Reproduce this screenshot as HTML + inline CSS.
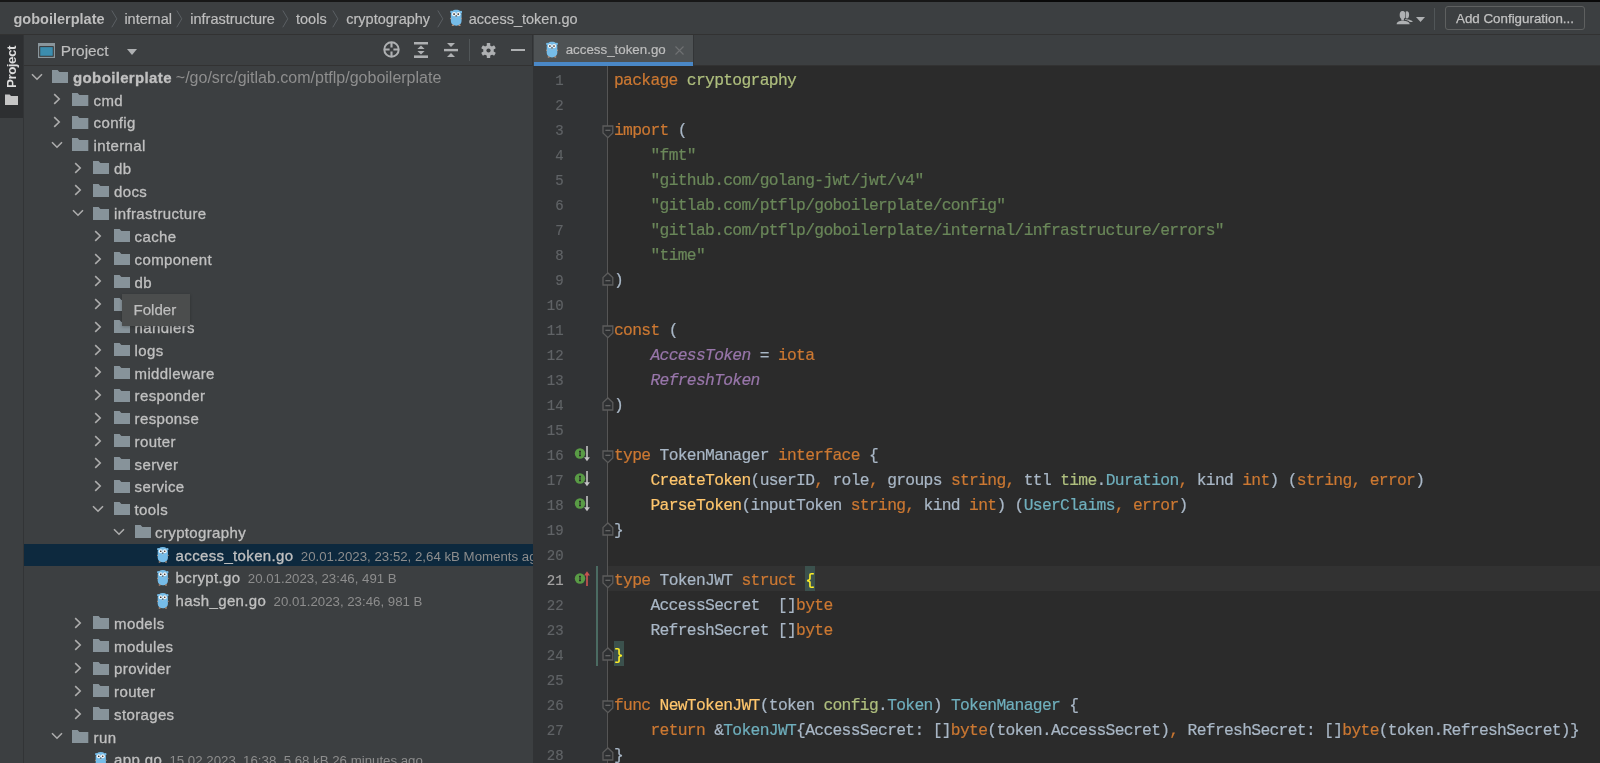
<!DOCTYPE html><html><head><meta charset="utf-8"><style>
*{margin:0;padding:0;box-sizing:border-box}
html,body{width:1600px;height:763px;overflow:hidden;background:#3C3F41;font-family:"Liberation Sans", sans-serif;}
.ab{position:absolute;display:block}
.t{position:absolute;white-space:pre;}
.nav{font-size:14.5px;color:#BEBEBE;-webkit-text-stroke:0.2px currentColor;}
.tree{font-size:15px;letter-spacing:0.35px;color:#C0C0C0;-webkit-text-stroke:0.3px currentColor;}
.meta{font-size:13.25px;letter-spacing:0;-webkit-text-stroke:0;color:#8D8D8D;}
.code{position:absolute;left:614px;font-family:"Liberation Mono", monospace;font-size:16.3px;letter-spacing:-0.667px;line-height:25px;white-space:pre;color:#A9B7C6;-webkit-text-stroke:0.2px currentColor;}
.ln{position:absolute;width:40px;text-align:right;font-family:"Liberation Mono", monospace;font-size:14px;line-height:25px;color:#606366;-webkit-text-stroke:0.2px currentColor;}
.k{color:#CC7832} .s{color:#6A8759} .pk{color:#AFBF7E} .fn{color:#FFC66D} .ty{color:#6FAFBD} .c{color:#9876AA;font-style:italic}
</style></head><body><div class="ab" style="left:0;top:0;width:1020px;height:2px;background:#171717"></div>
<div class="ab" style="left:1020px;top:0;width:580px;height:2px;background:#090909"></div>
<div class="ab" style="left:0;top:2px;width:1600px;height:32px;background:#3C3F41"></div>
<div class="ab" style="left:0;top:34px;width:1600px;height:1px;background:#323232"></div>
<svg class="ab" style="left:110.5px;top:10px" width="7" height="18" viewBox="0 0 7 18"><path d="M0.8 0.5L5.8 8.8L0.8 17.3" fill="none" stroke="#5B6064" stroke-width="1"/></svg>
<svg class="ab" style="left:176px;top:10px" width="7" height="18" viewBox="0 0 7 18"><path d="M0.8 0.5L5.8 8.8L0.8 17.3" fill="none" stroke="#5B6064" stroke-width="1"/></svg>
<svg class="ab" style="left:282px;top:10px" width="7" height="18" viewBox="0 0 7 18"><path d="M0.8 0.5L5.8 8.8L0.8 17.3" fill="none" stroke="#5B6064" stroke-width="1"/></svg>
<svg class="ab" style="left:332px;top:10px" width="7" height="18" viewBox="0 0 7 18"><path d="M0.8 0.5L5.8 8.8L0.8 17.3" fill="none" stroke="#5B6064" stroke-width="1"/></svg>
<svg class="ab" style="left:437px;top:10px" width="7" height="18" viewBox="0 0 7 18"><path d="M0.8 0.5L5.8 8.8L0.8 17.3" fill="none" stroke="#5B6064" stroke-width="1"/></svg>
<svg class="ab" style="left:450px;top:9px" width="12.4" height="17.2" viewBox="0 0 12 17"><g>
<circle cx="1.2" cy="2.9" r="1.15" fill="#76BCE8"/><circle cx="10.8" cy="2.9" r="1.15" fill="#76BCE8"/>
<path d="M6 0.7C9.3 0.7 11.3 2.6 11.3 5.5V11.6C11.3 14.6 9.2 16.5 6 16.5C2.8 16.5 0.7 14.6 0.7 11.6V5.5C0.7 2.6 2.7 0.7 6 0.7Z" fill="#76BCE8"/>
<ellipse cx="0.45" cy="9.3" rx="0.6" ry="0.75" fill="#B89178"/><ellipse cx="11.55" cy="9.3" rx="0.6" ry="0.75" fill="#B89178"/>
<ellipse cx="2.7" cy="16.1" rx="1.1" ry="0.75" fill="#B89178"/><ellipse cx="9.3" cy="16.1" rx="1.1" ry="0.75" fill="#B89178"/>
<circle cx="3.9" cy="5.1" r="2.05" fill="#F2F4F5"/><circle cx="8.1" cy="5.1" r="2.05" fill="#F2F4F5"/>
<circle cx="3.9" cy="5" r="0.85" fill="#1E1A1A"/><circle cx="8.0" cy="5" r="0.85" fill="#3A2E2A"/>
<ellipse cx="6" cy="7.6" rx="0.8" ry="0.55" fill="#E6CDB5"/>
<ellipse cx="6" cy="6.9" rx="0.75" ry="0.6" fill="#2A3442"/>
</g></svg>
<svg class="ab" style="left:1395px;top:10px" width="19" height="16" viewBox="0 0 19 16">
<ellipse cx="11.9" cy="4.8" rx="2.2" ry="3.6" fill="#AEB0B2"/>
<path d="M10 9.2C13 9.4 16.6 9.8 17.6 11.6L17.6 12H10Z" fill="#AEB0B2"/>
<g stroke="#3C3F41" stroke-width="1.1" fill="#AEB0B2">
<ellipse cx="7.6" cy="5" rx="2.9" ry="4.1"/>
<path d="M0.9 14.9C0.9 11.8 3.8 10.2 7.6 10C11.4 10.2 15.4 11.8 15.4 14.9Z"/>
</g>
<ellipse cx="7.6" cy="5" rx="2.9" ry="4.1" fill="#AEB0B2"/>
<rect x="6.3" y="7.5" width="2.6" height="3" fill="#AEB0B2"/>
</svg>
<svg class="ab" style="left:1416px;top:17px" width="9" height="5" viewBox="0 0 9 5"><path d="M0 0H9L4.5 5Z" fill="#AEB0B2"/></svg>
<div class="ab" style="left:1434px;top:8px;width:1px;height:22px;background:#515658"></div>
<div class="ab" style="left:1445px;top:6px;width:140px;height:24px;border:1px solid #5E6060;border-radius:3px"></div>
<div class="ab" style="left:0;top:35px;width:23px;height:728px;background:#3C3F41"></div>
<div class="ab" style="left:0;top:35px;width:23px;height:83px;background:#2D2F31"></div>
<div class="ab" style="left:23px;top:35px;width:1px;height:728px;background:#323436"></div>
<svg class="ab" style="left:5px;top:94px" width="13.3" height="11.4" viewBox="0 0 16.3 13"><path d="M0 0H5.6L7.4 2.1H16.3V13H0Z" fill="#C5C5C5"/></svg>
<div class="ab" style="left:24px;top:35px;width:509px;height:30px;background:#3C3F41"></div>
<div class="ab" style="left:24px;top:65px;width:509px;height:1px;background:#323232"></div>
<svg class="ab" style="left:38px;top:43px" width="17" height="15" viewBox="0 0 17 15"><rect x="0" y="0" width="17" height="15" fill="#8A969C"/><rect x="1.3" y="3.2" width="14.4" height="10.5" fill="#2B2B2B"/><rect x="2.2" y="4.1" width="12.6" height="8.7" fill="#3C8DAE"/></svg>
<svg class="ab" style="left:126.5px;top:48.5px" width="10" height="6" viewBox="0 0 10 6"><path d="M0 0H10L5 6Z" fill="#AEB0B2"/></svg>
<svg class="ab" style="left:383px;top:41px" width="17" height="17" viewBox="0 0 17 17"><circle cx="8.5" cy="8.5" r="7.2" fill="none" stroke="#AEB0B2" stroke-width="2"/><path d="M8.5 1V6.6M8.5 10.4V16M1 8.5H6.6M10.4 8.5H16" stroke="#AEB0B2" stroke-width="2.1"/></svg>
<svg class="ab" style="left:414px;top:42px" width="14" height="16" viewBox="0 0 14 16"><rect x="0" y="0" width="14" height="2.5" fill="#AEB0B2"/><rect x="0" y="13.4" width="14" height="2.6" fill="#AEB0B2"/><path d="M7 3.6L10.6 7H3.4Z M7 12.4L10.6 9H3.4Z" fill="#AEB0B2"/></svg>
<svg class="ab" style="left:443.5px;top:43px" width="14" height="14" viewBox="0 0 14 14"><path d="M3 0H11L7 4Z M3 14H11L7 10Z" fill="#AEB0B2"/><rect x="0" y="5.9" width="14" height="2.4" fill="#AEB0B2"/></svg>
<div class="ab" style="left:469px;top:39px;width:1px;height:22px;background:#515658"></div>
<svg class="ab" style="left:480.5px;top:42.5px" width="15" height="15" viewBox="0 0 15 15"><g fill="#AEB0B2"><circle cx="7.5" cy="7.5" r="5.2"/><g id="tg"><rect x="5.8" y="0" width="3.4" height="15" rx="0.6"/></g><rect x="5.8" y="0" width="3.4" height="15" rx="0.6" transform="rotate(60 7.5 7.5)"/><rect x="5.8" y="0" width="3.4" height="15" rx="0.6" transform="rotate(120 7.5 7.5)"/></g><circle cx="7.5" cy="7.5" r="2.1" fill="#3C3F41"/></svg>
<div class="ab" style="left:510.8px;top:48.8px;width:14.2px;height:2.6px;background:#AEB0B2"></div>
<div class="ab" style="left:533px;top:35px;width:1067px;height:31px;background:#3C3F41"></div>
<div class="ab" style="left:533.8px;top:35px;width:159.4px;height:27px;background:#4E5254"></div>
<div class="ab" style="left:533.8px;top:62px;width:159.4px;height:4px;background:#4A88C7"></div>
<div class="ab" style="left:693px;top:65px;width:907px;height:1px;background:#323232"></div>
<div class="ab" style="left:693.2px;top:35px;width:1px;height:31px;background:#333537"></div>
<svg class="ab" style="left:546px;top:41.2px" width="12" height="17" viewBox="0 0 12 17"><g>
<circle cx="1.2" cy="2.9" r="1.15" fill="#76BCE8"/><circle cx="10.8" cy="2.9" r="1.15" fill="#76BCE8"/>
<path d="M6 0.7C9.3 0.7 11.3 2.6 11.3 5.5V11.6C11.3 14.6 9.2 16.5 6 16.5C2.8 16.5 0.7 14.6 0.7 11.6V5.5C0.7 2.6 2.7 0.7 6 0.7Z" fill="#76BCE8"/>
<ellipse cx="0.45" cy="9.3" rx="0.6" ry="0.75" fill="#B89178"/><ellipse cx="11.55" cy="9.3" rx="0.6" ry="0.75" fill="#B89178"/>
<ellipse cx="2.7" cy="16.1" rx="1.1" ry="0.75" fill="#B89178"/><ellipse cx="9.3" cy="16.1" rx="1.1" ry="0.75" fill="#B89178"/>
<circle cx="3.9" cy="5.1" r="2.05" fill="#F2F4F5"/><circle cx="8.1" cy="5.1" r="2.05" fill="#F2F4F5"/>
<circle cx="3.9" cy="5" r="0.85" fill="#1E1A1A"/><circle cx="8.0" cy="5" r="0.85" fill="#3A2E2A"/>
<ellipse cx="6" cy="7.6" rx="0.8" ry="0.55" fill="#E6CDB5"/>
<ellipse cx="6" cy="6.9" rx="0.75" ry="0.6" fill="#2A3442"/>
</g></svg>
<svg class="ab" style="left:675px;top:45.5px" width="9" height="9" viewBox="0 0 9 9"><path d="M0.5 0.5L8.5 8.5M8.5 0.5L0.5 8.5" stroke="#6F7173" stroke-width="1.1"/></svg>
<div class="ab" style="left:533px;top:66px;width:74px;height:697px;background:#313335"></div>
<div class="ab" style="left:532px;top:35px;width:1px;height:31px;background:#313335"></div>
<div class="ab" style="left:607px;top:66px;width:1px;height:697px;background:#555555"></div>
<div class="ab" style="left:608px;top:66px;width:992px;height:697px;background:#2B2B2B"></div>
<div class="ab" style="left:24px;top:543.70px;width:509px;height:22.4px;background:#0D293E"></div>
<div class="ab" style="left:24px;top:66px;width:509px;height:697px;overflow:hidden">
<svg class="ab" style="left:6.699999999999999px;top:6.67px" width="12" height="8" viewBox="0 0 12 8"><path d="M1 1.2L6 6.2L11 1.2" fill="none" stroke="#ADADAD" stroke-width="1.6"/></svg>
<svg class="ab" style="left:27.7px;top:4.17px" width="16.3" height="13" viewBox="0 0 16.3 13"><path d="M0 0H5.6L7.4 2.1H16.3V13H0Z" fill="#87939A"/></svg>
<svg class="ab" style="left:29.200000000000003px;top:27.42px" width="8" height="12" viewBox="0 0 8 12"><path d="M1.2 1.2L6.2 6L1.2 10.8" fill="none" stroke="#ADADAD" stroke-width="1.6"/></svg>
<svg class="ab" style="left:48.4px;top:26.92px" width="16.3" height="13" viewBox="0 0 16.3 13"><path d="M0 0H5.6L7.4 2.1H16.3V13H0Z" fill="#87939A"/></svg>
<svg class="ab" style="left:29.200000000000003px;top:50.17px" width="8" height="12" viewBox="0 0 8 12"><path d="M1.2 1.2L6.2 6L1.2 10.8" fill="none" stroke="#ADADAD" stroke-width="1.6"/></svg>
<svg class="ab" style="left:48.4px;top:49.67px" width="16.3" height="13" viewBox="0 0 16.3 13"><path d="M0 0H5.6L7.4 2.1H16.3V13H0Z" fill="#87939A"/></svg>
<svg class="ab" style="left:27.200000000000003px;top:74.93px" width="12" height="8" viewBox="0 0 12 8"><path d="M1 1.2L6 6.2L11 1.2" fill="none" stroke="#ADADAD" stroke-width="1.6"/></svg>
<svg class="ab" style="left:48.4px;top:72.43px" width="16.3" height="13" viewBox="0 0 16.3 13"><path d="M0 0H5.6L7.4 2.1H16.3V13H0Z" fill="#87939A"/></svg>
<svg class="ab" style="left:49.7px;top:95.68px" width="8" height="12" viewBox="0 0 8 12"><path d="M1.2 1.2L6.2 6L1.2 10.8" fill="none" stroke="#ADADAD" stroke-width="1.6"/></svg>
<svg class="ab" style="left:69.1px;top:95.18px" width="16.3" height="13" viewBox="0 0 16.3 13"><path d="M0 0H5.6L7.4 2.1H16.3V13H0Z" fill="#87939A"/></svg>
<svg class="ab" style="left:49.7px;top:118.43px" width="8" height="12" viewBox="0 0 8 12"><path d="M1.2 1.2L6.2 6L1.2 10.8" fill="none" stroke="#ADADAD" stroke-width="1.6"/></svg>
<svg class="ab" style="left:69.1px;top:117.93px" width="16.3" height="13" viewBox="0 0 16.3 13"><path d="M0 0H5.6L7.4 2.1H16.3V13H0Z" fill="#87939A"/></svg>
<svg class="ab" style="left:47.7px;top:143.18px" width="12" height="8" viewBox="0 0 12 8"><path d="M1 1.2L6 6.2L11 1.2" fill="none" stroke="#ADADAD" stroke-width="1.6"/></svg>
<svg class="ab" style="left:69.1px;top:140.68px" width="16.3" height="13" viewBox="0 0 16.3 13"><path d="M0 0H5.6L7.4 2.1H16.3V13H0Z" fill="#87939A"/></svg>
<svg class="ab" style="left:70.2px;top:163.93px" width="8" height="12" viewBox="0 0 8 12"><path d="M1.2 1.2L6.2 6L1.2 10.8" fill="none" stroke="#ADADAD" stroke-width="1.6"/></svg>
<svg class="ab" style="left:89.8px;top:163.43px" width="16.3" height="13" viewBox="0 0 16.3 13"><path d="M0 0H5.6L7.4 2.1H16.3V13H0Z" fill="#87939A"/></svg>
<svg class="ab" style="left:70.2px;top:186.68px" width="8" height="12" viewBox="0 0 8 12"><path d="M1.2 1.2L6.2 6L1.2 10.8" fill="none" stroke="#ADADAD" stroke-width="1.6"/></svg>
<svg class="ab" style="left:89.8px;top:186.18px" width="16.3" height="13" viewBox="0 0 16.3 13"><path d="M0 0H5.6L7.4 2.1H16.3V13H0Z" fill="#87939A"/></svg>
<svg class="ab" style="left:70.2px;top:209.43px" width="8" height="12" viewBox="0 0 8 12"><path d="M1.2 1.2L6.2 6L1.2 10.8" fill="none" stroke="#ADADAD" stroke-width="1.6"/></svg>
<svg class="ab" style="left:89.8px;top:208.93px" width="16.3" height="13" viewBox="0 0 16.3 13"><path d="M0 0H5.6L7.4 2.1H16.3V13H0Z" fill="#87939A"/></svg>
<svg class="ab" style="left:70.2px;top:232.18px" width="8" height="12" viewBox="0 0 8 12"><path d="M1.2 1.2L6.2 6L1.2 10.8" fill="none" stroke="#ADADAD" stroke-width="1.6"/></svg>
<svg class="ab" style="left:89.8px;top:231.68px" width="16.3" height="13" viewBox="0 0 16.3 13"><path d="M0 0H5.6L7.4 2.1H16.3V13H0Z" fill="#87939A"/></svg>
<svg class="ab" style="left:70.2px;top:254.93px" width="8" height="12" viewBox="0 0 8 12"><path d="M1.2 1.2L6.2 6L1.2 10.8" fill="none" stroke="#ADADAD" stroke-width="1.6"/></svg>
<svg class="ab" style="left:89.8px;top:254.43px" width="16.3" height="13" viewBox="0 0 16.3 13"><path d="M0 0H5.6L7.4 2.1H16.3V13H0Z" fill="#87939A"/></svg>
<svg class="ab" style="left:70.2px;top:277.68px" width="8" height="12" viewBox="0 0 8 12"><path d="M1.2 1.2L6.2 6L1.2 10.8" fill="none" stroke="#ADADAD" stroke-width="1.6"/></svg>
<svg class="ab" style="left:89.8px;top:277.18px" width="16.3" height="13" viewBox="0 0 16.3 13"><path d="M0 0H5.6L7.4 2.1H16.3V13H0Z" fill="#87939A"/></svg>
<svg class="ab" style="left:70.2px;top:300.43px" width="8" height="12" viewBox="0 0 8 12"><path d="M1.2 1.2L6.2 6L1.2 10.8" fill="none" stroke="#ADADAD" stroke-width="1.6"/></svg>
<svg class="ab" style="left:89.8px;top:299.93px" width="16.3" height="13" viewBox="0 0 16.3 13"><path d="M0 0H5.6L7.4 2.1H16.3V13H0Z" fill="#87939A"/></svg>
<svg class="ab" style="left:70.2px;top:323.18px" width="8" height="12" viewBox="0 0 8 12"><path d="M1.2 1.2L6.2 6L1.2 10.8" fill="none" stroke="#ADADAD" stroke-width="1.6"/></svg>
<svg class="ab" style="left:89.8px;top:322.68px" width="16.3" height="13" viewBox="0 0 16.3 13"><path d="M0 0H5.6L7.4 2.1H16.3V13H0Z" fill="#87939A"/></svg>
<svg class="ab" style="left:70.2px;top:345.93px" width="8" height="12" viewBox="0 0 8 12"><path d="M1.2 1.2L6.2 6L1.2 10.8" fill="none" stroke="#ADADAD" stroke-width="1.6"/></svg>
<svg class="ab" style="left:89.8px;top:345.43px" width="16.3" height="13" viewBox="0 0 16.3 13"><path d="M0 0H5.6L7.4 2.1H16.3V13H0Z" fill="#87939A"/></svg>
<svg class="ab" style="left:70.2px;top:368.68px" width="8" height="12" viewBox="0 0 8 12"><path d="M1.2 1.2L6.2 6L1.2 10.8" fill="none" stroke="#ADADAD" stroke-width="1.6"/></svg>
<svg class="ab" style="left:89.8px;top:368.18px" width="16.3" height="13" viewBox="0 0 16.3 13"><path d="M0 0H5.6L7.4 2.1H16.3V13H0Z" fill="#87939A"/></svg>
<svg class="ab" style="left:70.2px;top:391.43px" width="8" height="12" viewBox="0 0 8 12"><path d="M1.2 1.2L6.2 6L1.2 10.8" fill="none" stroke="#ADADAD" stroke-width="1.6"/></svg>
<svg class="ab" style="left:89.8px;top:390.93px" width="16.3" height="13" viewBox="0 0 16.3 13"><path d="M0 0H5.6L7.4 2.1H16.3V13H0Z" fill="#87939A"/></svg>
<svg class="ab" style="left:70.2px;top:414.18px" width="8" height="12" viewBox="0 0 8 12"><path d="M1.2 1.2L6.2 6L1.2 10.8" fill="none" stroke="#ADADAD" stroke-width="1.6"/></svg>
<svg class="ab" style="left:89.8px;top:413.68px" width="16.3" height="13" viewBox="0 0 16.3 13"><path d="M0 0H5.6L7.4 2.1H16.3V13H0Z" fill="#87939A"/></svg>
<svg class="ab" style="left:68.2px;top:438.93px" width="12" height="8" viewBox="0 0 12 8"><path d="M1 1.2L6 6.2L11 1.2" fill="none" stroke="#ADADAD" stroke-width="1.6"/></svg>
<svg class="ab" style="left:89.8px;top:436.43px" width="16.3" height="13" viewBox="0 0 16.3 13"><path d="M0 0H5.6L7.4 2.1H16.3V13H0Z" fill="#87939A"/></svg>
<svg class="ab" style="left:88.7px;top:461.67px" width="12" height="8" viewBox="0 0 12 8"><path d="M1 1.2L6 6.2L11 1.2" fill="none" stroke="#ADADAD" stroke-width="1.6"/></svg>
<svg class="ab" style="left:110.5px;top:459.17px" width="16.3" height="13" viewBox="0 0 16.3 13"><path d="M0 0H5.6L7.4 2.1H16.3V13H0Z" fill="#87939A"/></svg>
<svg class="ab" style="left:133.4px;top:480.02px" width="11.6" height="17.2" viewBox="0 0 12 17"><g>
<circle cx="1.2" cy="2.9" r="1.15" fill="#76BCE8"/><circle cx="10.8" cy="2.9" r="1.15" fill="#76BCE8"/>
<path d="M6 0.7C9.3 0.7 11.3 2.6 11.3 5.5V11.6C11.3 14.6 9.2 16.5 6 16.5C2.8 16.5 0.7 14.6 0.7 11.6V5.5C0.7 2.6 2.7 0.7 6 0.7Z" fill="#76BCE8"/>
<ellipse cx="0.45" cy="9.3" rx="0.6" ry="0.75" fill="#B89178"/><ellipse cx="11.55" cy="9.3" rx="0.6" ry="0.75" fill="#B89178"/>
<ellipse cx="2.7" cy="16.1" rx="1.1" ry="0.75" fill="#B89178"/><ellipse cx="9.3" cy="16.1" rx="1.1" ry="0.75" fill="#B89178"/>
<circle cx="3.9" cy="5.1" r="2.05" fill="#F2F4F5"/><circle cx="8.1" cy="5.1" r="2.05" fill="#F2F4F5"/>
<circle cx="3.9" cy="5" r="0.85" fill="#1E1A1A"/><circle cx="8.0" cy="5" r="0.85" fill="#3A2E2A"/>
<ellipse cx="6" cy="7.6" rx="0.8" ry="0.55" fill="#E6CDB5"/>
<ellipse cx="6" cy="6.9" rx="0.75" ry="0.6" fill="#2A3442"/>
</g></svg>
<svg class="ab" style="left:133.4px;top:502.77px" width="11.6" height="17.2" viewBox="0 0 12 17"><g>
<circle cx="1.2" cy="2.9" r="1.15" fill="#76BCE8"/><circle cx="10.8" cy="2.9" r="1.15" fill="#76BCE8"/>
<path d="M6 0.7C9.3 0.7 11.3 2.6 11.3 5.5V11.6C11.3 14.6 9.2 16.5 6 16.5C2.8 16.5 0.7 14.6 0.7 11.6V5.5C0.7 2.6 2.7 0.7 6 0.7Z" fill="#76BCE8"/>
<ellipse cx="0.45" cy="9.3" rx="0.6" ry="0.75" fill="#B89178"/><ellipse cx="11.55" cy="9.3" rx="0.6" ry="0.75" fill="#B89178"/>
<ellipse cx="2.7" cy="16.1" rx="1.1" ry="0.75" fill="#B89178"/><ellipse cx="9.3" cy="16.1" rx="1.1" ry="0.75" fill="#B89178"/>
<circle cx="3.9" cy="5.1" r="2.05" fill="#F2F4F5"/><circle cx="8.1" cy="5.1" r="2.05" fill="#F2F4F5"/>
<circle cx="3.9" cy="5" r="0.85" fill="#1E1A1A"/><circle cx="8.0" cy="5" r="0.85" fill="#3A2E2A"/>
<ellipse cx="6" cy="7.6" rx="0.8" ry="0.55" fill="#E6CDB5"/>
<ellipse cx="6" cy="6.9" rx="0.75" ry="0.6" fill="#2A3442"/>
</g></svg>
<svg class="ab" style="left:133.4px;top:525.52px" width="11.6" height="17.2" viewBox="0 0 12 17"><g>
<circle cx="1.2" cy="2.9" r="1.15" fill="#76BCE8"/><circle cx="10.8" cy="2.9" r="1.15" fill="#76BCE8"/>
<path d="M6 0.7C9.3 0.7 11.3 2.6 11.3 5.5V11.6C11.3 14.6 9.2 16.5 6 16.5C2.8 16.5 0.7 14.6 0.7 11.6V5.5C0.7 2.6 2.7 0.7 6 0.7Z" fill="#76BCE8"/>
<ellipse cx="0.45" cy="9.3" rx="0.6" ry="0.75" fill="#B89178"/><ellipse cx="11.55" cy="9.3" rx="0.6" ry="0.75" fill="#B89178"/>
<ellipse cx="2.7" cy="16.1" rx="1.1" ry="0.75" fill="#B89178"/><ellipse cx="9.3" cy="16.1" rx="1.1" ry="0.75" fill="#B89178"/>
<circle cx="3.9" cy="5.1" r="2.05" fill="#F2F4F5"/><circle cx="8.1" cy="5.1" r="2.05" fill="#F2F4F5"/>
<circle cx="3.9" cy="5" r="0.85" fill="#1E1A1A"/><circle cx="8.0" cy="5" r="0.85" fill="#3A2E2A"/>
<ellipse cx="6" cy="7.6" rx="0.8" ry="0.55" fill="#E6CDB5"/>
<ellipse cx="6" cy="6.9" rx="0.75" ry="0.6" fill="#2A3442"/>
</g></svg>
<svg class="ab" style="left:49.7px;top:550.67px" width="8" height="12" viewBox="0 0 8 12"><path d="M1.2 1.2L6.2 6L1.2 10.8" fill="none" stroke="#ADADAD" stroke-width="1.6"/></svg>
<svg class="ab" style="left:69.1px;top:550.17px" width="16.3" height="13" viewBox="0 0 16.3 13"><path d="M0 0H5.6L7.4 2.1H16.3V13H0Z" fill="#87939A"/></svg>
<svg class="ab" style="left:49.7px;top:573.42px" width="8" height="12" viewBox="0 0 8 12"><path d="M1.2 1.2L6.2 6L1.2 10.8" fill="none" stroke="#ADADAD" stroke-width="1.6"/></svg>
<svg class="ab" style="left:69.1px;top:572.92px" width="16.3" height="13" viewBox="0 0 16.3 13"><path d="M0 0H5.6L7.4 2.1H16.3V13H0Z" fill="#87939A"/></svg>
<svg class="ab" style="left:49.7px;top:596.17px" width="8" height="12" viewBox="0 0 8 12"><path d="M1.2 1.2L6.2 6L1.2 10.8" fill="none" stroke="#ADADAD" stroke-width="1.6"/></svg>
<svg class="ab" style="left:69.1px;top:595.67px" width="16.3" height="13" viewBox="0 0 16.3 13"><path d="M0 0H5.6L7.4 2.1H16.3V13H0Z" fill="#87939A"/></svg>
<svg class="ab" style="left:49.7px;top:618.92px" width="8" height="12" viewBox="0 0 8 12"><path d="M1.2 1.2L6.2 6L1.2 10.8" fill="none" stroke="#ADADAD" stroke-width="1.6"/></svg>
<svg class="ab" style="left:69.1px;top:618.42px" width="16.3" height="13" viewBox="0 0 16.3 13"><path d="M0 0H5.6L7.4 2.1H16.3V13H0Z" fill="#87939A"/></svg>
<svg class="ab" style="left:49.7px;top:641.67px" width="8" height="12" viewBox="0 0 8 12"><path d="M1.2 1.2L6.2 6L1.2 10.8" fill="none" stroke="#ADADAD" stroke-width="1.6"/></svg>
<svg class="ab" style="left:69.1px;top:641.17px" width="16.3" height="13" viewBox="0 0 16.3 13"><path d="M0 0H5.6L7.4 2.1H16.3V13H0Z" fill="#87939A"/></svg>
<svg class="ab" style="left:27.200000000000003px;top:666.42px" width="12" height="8" viewBox="0 0 12 8"><path d="M1 1.2L6 6.2L11 1.2" fill="none" stroke="#ADADAD" stroke-width="1.6"/></svg>
<svg class="ab" style="left:48.4px;top:663.92px" width="16.3" height="13" viewBox="0 0 16.3 13"><path d="M0 0H5.6L7.4 2.1H16.3V13H0Z" fill="#87939A"/></svg>
<svg class="ab" style="left:71.3px;top:684.77px" width="11.6" height="17.2" viewBox="0 0 12 17"><g>
<circle cx="1.2" cy="2.9" r="1.15" fill="#76BCE8"/><circle cx="10.8" cy="2.9" r="1.15" fill="#76BCE8"/>
<path d="M6 0.7C9.3 0.7 11.3 2.6 11.3 5.5V11.6C11.3 14.6 9.2 16.5 6 16.5C2.8 16.5 0.7 14.6 0.7 11.6V5.5C0.7 2.6 2.7 0.7 6 0.7Z" fill="#76BCE8"/>
<ellipse cx="0.45" cy="9.3" rx="0.6" ry="0.75" fill="#B89178"/><ellipse cx="11.55" cy="9.3" rx="0.6" ry="0.75" fill="#B89178"/>
<ellipse cx="2.7" cy="16.1" rx="1.1" ry="0.75" fill="#B89178"/><ellipse cx="9.3" cy="16.1" rx="1.1" ry="0.75" fill="#B89178"/>
<circle cx="3.9" cy="5.1" r="2.05" fill="#F2F4F5"/><circle cx="8.1" cy="5.1" r="2.05" fill="#F2F4F5"/>
<circle cx="3.9" cy="5" r="0.85" fill="#1E1A1A"/><circle cx="8.0" cy="5" r="0.85" fill="#3A2E2A"/>
<ellipse cx="6" cy="7.6" rx="0.8" ry="0.55" fill="#E6CDB5"/>
<ellipse cx="6" cy="6.9" rx="0.75" ry="0.6" fill="#2A3442"/>
</g></svg>
</div>
<div class="ab" style="left:608px;top:566px;width:992px;height:25px;background:#323232"></div>
<div class="ab" style="left:805.3px;top:566px;width:9.7px;height:25px;background:#3B514D"></div>
<div class="ab" style="left:614.3px;top:641px;width:9.5px;height:25px;background:#3B514D"></div>
<svg class="ab" style="left:601.5px;top:124.6px" width="12" height="14" viewBox="0 0 12 14"><path d="M1 1H10.8V8L5.9 12.6L1 8Z" fill="#2E3032" stroke="#5C5C5C" stroke-width="1.3"/><path d="M3.4 5.3H8.4" stroke="#6A6A6A" stroke-width="1.2"/></svg>
<svg class="ab" style="left:601.5px;top:324.6px" width="12" height="14" viewBox="0 0 12 14"><path d="M1 1H10.8V8L5.9 12.6L1 8Z" fill="#2E3032" stroke="#5C5C5C" stroke-width="1.3"/><path d="M3.4 5.3H8.4" stroke="#6A6A6A" stroke-width="1.2"/></svg>
<svg class="ab" style="left:601.5px;top:449.6px" width="12" height="14" viewBox="0 0 12 14"><path d="M1 1H10.8V8L5.9 12.6L1 8Z" fill="#2E3032" stroke="#5C5C5C" stroke-width="1.3"/><path d="M3.4 5.3H8.4" stroke="#6A6A6A" stroke-width="1.2"/></svg>
<svg class="ab" style="left:601.5px;top:574.6px" width="12" height="14" viewBox="0 0 12 14"><path d="M1 1H10.8V8L5.9 12.6L1 8Z" fill="#2E3032" stroke="#5C5C5C" stroke-width="1.3"/><path d="M3.4 5.3H8.4" stroke="#6A6A6A" stroke-width="1.2"/></svg>
<svg class="ab" style="left:601.5px;top:699.6px" width="12" height="14" viewBox="0 0 12 14"><path d="M1 1H10.8V8L5.9 12.6L1 8Z" fill="#2E3032" stroke="#5C5C5C" stroke-width="1.3"/><path d="M3.4 5.3H8.4" stroke="#6A6A6A" stroke-width="1.2"/></svg>
<svg class="ab" style="left:601.5px;top:272.3px" width="12" height="14" viewBox="0 0 12 14"><path d="M1 13H10.8V5.6L5.9 1L1 5.6Z" fill="#2E3032" stroke="#5C5C5C" stroke-width="1.3"/><path d="M3.4 8.7H8.4" stroke="#6A6A6A" stroke-width="1.2"/></svg>
<svg class="ab" style="left:601.5px;top:397.3px" width="12" height="14" viewBox="0 0 12 14"><path d="M1 13H10.8V5.6L5.9 1L1 5.6Z" fill="#2E3032" stroke="#5C5C5C" stroke-width="1.3"/><path d="M3.4 8.7H8.4" stroke="#6A6A6A" stroke-width="1.2"/></svg>
<svg class="ab" style="left:601.5px;top:522.3px" width="12" height="14" viewBox="0 0 12 14"><path d="M1 13H10.8V5.6L5.9 1L1 5.6Z" fill="#2E3032" stroke="#5C5C5C" stroke-width="1.3"/><path d="M3.4 8.7H8.4" stroke="#6A6A6A" stroke-width="1.2"/></svg>
<svg class="ab" style="left:601.5px;top:647.3px" width="12" height="14" viewBox="0 0 12 14"><path d="M1 13H10.8V5.6L5.9 1L1 5.6Z" fill="#2E3032" stroke="#5C5C5C" stroke-width="1.3"/><path d="M3.4 8.7H8.4" stroke="#6A6A6A" stroke-width="1.2"/></svg>
<svg class="ab" style="left:601.5px;top:747.3px" width="12" height="14" viewBox="0 0 12 14"><path d="M1 13H10.8V5.6L5.9 1L1 5.6Z" fill="#2E3032" stroke="#5C5C5C" stroke-width="1.3"/><path d="M3.4 8.7H8.4" stroke="#6A6A6A" stroke-width="1.2"/></svg>
<svg class="ab" style="left:574px;top:445px" width="17" height="17" viewBox="0 0 17 17"><circle cx="6" cy="8.5" r="5.2" fill="#599B45"/><path d="M6 6.3V10.7M5 6.3H7M5 10.7H7" stroke="#2B2B2B" stroke-width="1.2"/><path d="M13 0.9V13.5" stroke="#C4C4C4" stroke-width="1.6"/><path d="M10.1 12.3L13 16.3L15.9 12.3Z" fill="#C4C4C4"/></svg>
<svg class="ab" style="left:574px;top:470px" width="17" height="17" viewBox="0 0 17 17"><circle cx="6" cy="8.5" r="5.2" fill="#599B45"/><path d="M6 6.3V10.7M5 6.3H7M5 10.7H7" stroke="#2B2B2B" stroke-width="1.2"/><path d="M13 0.9V13.5" stroke="#C4C4C4" stroke-width="1.6"/><path d="M10.1 12.3L13 16.3L15.9 12.3Z" fill="#C4C4C4"/></svg>
<svg class="ab" style="left:574px;top:495px" width="17" height="17" viewBox="0 0 17 17"><circle cx="6" cy="8.5" r="5.2" fill="#599B45"/><path d="M6 6.3V10.7M5 6.3H7M5 10.7H7" stroke="#2B2B2B" stroke-width="1.2"/><path d="M13 0.9V13.5" stroke="#C4C4C4" stroke-width="1.6"/><path d="M10.1 12.3L13 16.3L15.9 12.3Z" fill="#C4C4C4"/></svg>
<svg class="ab" style="left:574px;top:570px" width="17" height="17" viewBox="0 0 17 17"><circle cx="6" cy="8.5" r="5.2" fill="#599B45"/><path d="M6 6.3V10.7M5 6.3H7M5 10.7H7" stroke="#2B2B2B" stroke-width="1.2"/><path d="M13 16V3.5" stroke="#C75450" stroke-width="1.7"/><path d="M10 5.5L13 1.3L16 5.5Z" fill="#C75450"/></svg>
<div class="ab" style="left:596px;top:566px;width:2px;height:100px;background:#4B6B62"></div><div class="ab" style="left:0;top:0;width:1600px;height:763px;will-change:transform"><div class="t nav" style="left:13.5px;top:11px;font-weight:bold;-webkit-text-stroke:0">goboilerplate</div>
<div class="t nav" style="left:124.4px;top:11px;">internal</div>
<div class="t nav" style="left:190.25px;top:11px;">infrastructure</div>
<div class="t nav" style="left:296px;top:11px;">tools</div>
<div class="t nav" style="left:346.25px;top:11px;">cryptography</div>
<div class="t nav" style="left:468.8px;top:11px">access_token.go</div>
<div class="t" style="left:1456px;top:10.8px;font-size:13.35px;color:#C2C2C2;-webkit-text-stroke:0.25px currentColor">Add Configuration...</div>
<div class="t" style="left:4px;top:87.5px;font-size:13.5px;letter-spacing:-0.55px;line-height:normal;font-weight:bold;color:#DDDDDD;transform:rotate(-90deg);transform-origin:0 0;">Project</div>
<div class="t" style="left:60.7px;top:42px;font-size:15.4px;color:#BEBEBE;-webkit-text-stroke:0.2px currentColor">Project</div>
<div class="t" style="left:565.7px;top:42px;font-size:13.33px;color:#BEBEBE;-webkit-text-stroke:0.2px currentColor">access_token.go</div>
<div class="ab" style="left:24px;top:66px;width:509px;height:697px;overflow:hidden">
<div class="t tree" style="left:49.10px;top:2.77px;font-weight:bold">goboilerplate<span style="font-weight:normal;color:#8E8E8E;font-size:16px;letter-spacing:0;-webkit-text-stroke:0;margin-left:4px">~/go/src/gitlab.com/ptflp/goboilerplate</span></div>
<div class="t tree" style="left:69.60px;top:25.52px">cmd</div>
<div class="t tree" style="left:69.60px;top:48.27px">config</div>
<div class="t tree" style="left:69.60px;top:71.03px">internal</div>
<div class="t tree" style="left:90.10px;top:93.78px">db</div>
<div class="t tree" style="left:90.10px;top:116.53px">docs</div>
<div class="t tree" style="left:90.10px;top:139.28px">infrastructure</div>
<div class="t tree" style="left:110.60px;top:162.03px">cache</div>
<div class="t tree" style="left:110.60px;top:184.78px">component</div>
<div class="t tree" style="left:110.60px;top:207.53px">db</div>
<div class="t tree" style="left:110.60px;top:230.28px">errors</div>
<div class="t tree" style="left:110.60px;top:253.03px">handlers</div>
<div class="t tree" style="left:110.60px;top:275.78px">logs</div>
<div class="t tree" style="left:110.60px;top:298.53px">middleware</div>
<div class="t tree" style="left:110.60px;top:321.28px">responder</div>
<div class="t tree" style="left:110.60px;top:344.03px">response</div>
<div class="t tree" style="left:110.60px;top:366.78px">router</div>
<div class="t tree" style="left:110.60px;top:389.53px">server</div>
<div class="t tree" style="left:110.60px;top:412.28px">service</div>
<div class="t tree" style="left:110.60px;top:435.03px">tools</div>
<div class="t tree" style="left:131.10px;top:457.77px">cryptography</div>
<div class="t tree" style="left:151.60px;top:480.52px">access_token.go<span class="meta">  20.01.2023, 23:52, 2,64 kB Moments ago</span></div>
<div class="t tree" style="left:151.60px;top:503.27px">bcrypt.go<span class="meta">  20.01.2023, 23:46, 491 B</span></div>
<div class="t tree" style="left:151.60px;top:526.02px">hash_gen.go<span class="meta">  20.01.2023, 23:46, 981 B</span></div>
<div class="t tree" style="left:90.10px;top:548.77px">models</div>
<div class="t tree" style="left:90.10px;top:571.52px">modules</div>
<div class="t tree" style="left:90.10px;top:594.27px">provider</div>
<div class="t tree" style="left:90.10px;top:617.02px">router</div>
<div class="t tree" style="left:90.10px;top:639.77px">storages</div>
<div class="t tree" style="left:69.60px;top:662.52px">run</div>
<div class="t tree" style="left:90.10px;top:685.27px">app.go<span class="meta">  15.02.2023, 16:38, 5,68 kB 26 minutes ago</span></div>
</div>
<div class="ln" style="left:523.6px;top:68.6px;color:#606366">1</div>
<div class="code" style="top:68px"><span class="k">package</span> <span class="pk">cryptography</span></div>
<div class="ln" style="left:523.6px;top:93.6px;color:#606366">2</div>
<div class="ln" style="left:523.6px;top:118.6px;color:#606366">3</div>
<div class="code" style="top:118px"><span class="k">import</span> (</div>
<div class="ln" style="left:523.6px;top:143.6px;color:#606366">4</div>
<div class="code" style="top:143px">    <span class="s">&quot;fmt&quot;</span></div>
<div class="ln" style="left:523.6px;top:168.6px;color:#606366">5</div>
<div class="code" style="top:168px">    <span class="s">&quot;github.com/golang-jwt/jwt/v4&quot;</span></div>
<div class="ln" style="left:523.6px;top:193.6px;color:#606366">6</div>
<div class="code" style="top:193px">    <span class="s">&quot;gitlab.com/ptflp/goboilerplate/config&quot;</span></div>
<div class="ln" style="left:523.6px;top:218.6px;color:#606366">7</div>
<div class="code" style="top:218px">    <span class="s">&quot;gitlab.com/ptflp/goboilerplate/internal/infrastructure/errors&quot;</span></div>
<div class="ln" style="left:523.6px;top:243.6px;color:#606366">8</div>
<div class="code" style="top:243px">    <span class="s">&quot;time&quot;</span></div>
<div class="ln" style="left:523.6px;top:268.6px;color:#606366">9</div>
<div class="code" style="top:268px">)</div>
<div class="ln" style="left:523.6px;top:293.6px;color:#606366">10</div>
<div class="ln" style="left:523.6px;top:318.6px;color:#606366">11</div>
<div class="code" style="top:318px"><span class="k">const</span> (</div>
<div class="ln" style="left:523.6px;top:343.6px;color:#606366">12</div>
<div class="code" style="top:343px">    <span class="c">AccessToken</span> = <span class="k">iota</span></div>
<div class="ln" style="left:523.6px;top:368.6px;color:#606366">13</div>
<div class="code" style="top:368px">    <span class="c">RefreshToken</span></div>
<div class="ln" style="left:523.6px;top:393.6px;color:#606366">14</div>
<div class="code" style="top:393px">)</div>
<div class="ln" style="left:523.6px;top:418.6px;color:#606366">15</div>
<div class="ln" style="left:523.6px;top:443.6px;color:#606366">16</div>
<div class="code" style="top:443px"><span class="k">type</span> TokenManager <span class="k">interface</span> {</div>
<div class="ln" style="left:523.6px;top:468.6px;color:#606366">17</div>
<div class="code" style="top:468px">    <span class="fn">CreateToken</span>(userID<span class="k">,</span> role<span class="k">,</span> groups <span class="k">string</span><span class="k">,</span> ttl <span class="pk">time</span>.<span class="ty">Duration</span><span class="k">,</span> kind <span class="k">int</span>) (<span class="k">string</span><span class="k">,</span> <span class="k">error</span>)</div>
<div class="ln" style="left:523.6px;top:493.6px;color:#606366">18</div>
<div class="code" style="top:493px">    <span class="fn">ParseToken</span>(inputToken <span class="k">string</span><span class="k">,</span> kind <span class="k">int</span>) (<span class="ty">UserClaims</span><span class="k">,</span> <span class="k">error</span>)</div>
<div class="ln" style="left:523.6px;top:518.6px;color:#606366">19</div>
<div class="code" style="top:518px">}</div>
<div class="ln" style="left:523.6px;top:543.6px;color:#606366">20</div>
<div class="ln" style="left:523.6px;top:568.6px;color:#A4A3A3">21</div>
<div class="code" style="top:568px"><span class="k">type</span> TokenJWT <span class="k">struct</span> <span style="color:#FFEF28">{</span></div>
<div class="ln" style="left:523.6px;top:593.6px;color:#606366">22</div>
<div class="code" style="top:593px">    AccessSecret  []<span class="k">byte</span></div>
<div class="ln" style="left:523.6px;top:618.6px;color:#606366">23</div>
<div class="code" style="top:618px">    RefreshSecret []<span class="k">byte</span></div>
<div class="ln" style="left:523.6px;top:643.6px;color:#606366">24</div>
<div class="code" style="top:643px"><span style="color:#FFEF28">}</span></div>
<div class="ln" style="left:523.6px;top:668.6px;color:#606366">25</div>
<div class="ln" style="left:523.6px;top:693.6px;color:#606366">26</div>
<div class="code" style="top:693px"><span class="k">func</span> <span class="fn">NewTokenJWT</span>(token <span class="pk">config</span>.<span class="ty">Token</span>) <span class="ty">TokenManager</span> {</div>
<div class="ln" style="left:523.6px;top:718.6px;color:#606366">27</div>
<div class="code" style="top:718px">    <span class="k">return</span> &amp;<span class="ty">TokenJWT</span>{AccessSecret: []<span class="k">byte</span>(token.AccessSecret)<span class="k">,</span> RefreshSecret: []<span class="k">byte</span>(token.RefreshSecret)}</div>
<div class="ln" style="left:523.6px;top:743.6px;color:#606366">28</div>
<div class="code" style="top:743px">}</div></div><div class="ab" style="left:0;top:0;width:1600px;height:763px;will-change:transform"><div class="ab" style="left:122px;top:294px;width:68px;height:32px;background:#4B4D4D;box-shadow:0 1px 3px rgba(0,0,0,0.25)"></div>
<div class="t" style="left:133.5px;top:301px;font-size:15.1px;color:#BEBEBE;-webkit-text-stroke:0.25px currentColor">Folder</div></div></body></html>
